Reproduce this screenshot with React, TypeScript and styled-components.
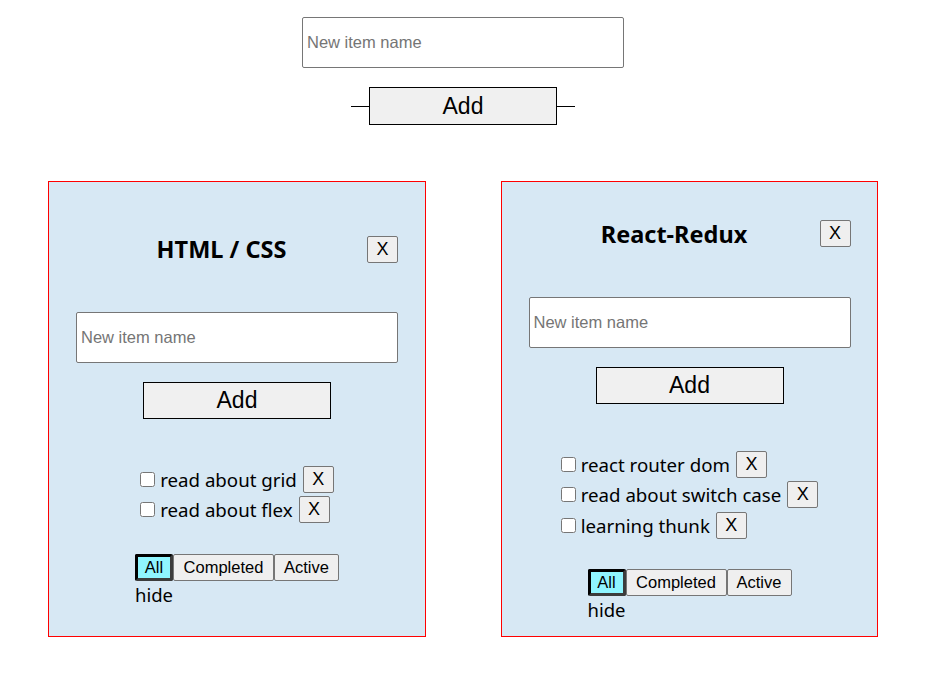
import styled, { createGlobalStyle } from 'styled-components';

const GlobalStyle = createGlobalStyle`
  body {
    margin: 0;
    background: #fff;
    font-family: "Noto Sans", "Open Sans", sans-serif;
    color: #000;
  }
`;

type Todo = { id: number; title: string };
type TodoList = { id: number; title: string; width: number; items: Todo[] };

const lists: TodoList[] = [
  {
    id: 1,
    title: 'HTML / CSS',
    width: 378,
    items: [
      { id: 1, title: 'read about grid' },
      { id: 2, title: 'read about flex' },
    ],
  },
  {
    id: 2,
    title: 'React-Redux',
    width: 377,
    items: [
      { id: 3, title: 'react router dom' },
      { id: 4, title: 'read about switch case' },
      { id: 5, title: 'learning thunk' },
    ],
  },
];

const filters = [
  { name: 'All', width: 38 },
  { name: 'Completed', width: 101 },
  { name: 'Active', width: 65 },
];

const App = () => {
  return (
    <Page>
      <GlobalStyle />
      <TopForm>
        <TextInput placeholder="New item name" />
        <AddRow>
          <Dash />
          <AddButton>Add</AddButton>
          <Dash />
        </AddRow>
      </TopForm>
      <Cards>
        {lists.map((list) => (
          <Card key={list.id} $width={list.width}>
            <CardBody>
              <Header>
                <Title>{list.title}</Title>
                <SmallButton>X</SmallButton>
              </Header>
              <CardInput placeholder="New item name" />
              <CardAdd>Add</CardAdd>
              <Items>
                {list.items.map((item) => (
                  <Item key={item.id}>
                    <Check type="checkbox" />
                    <ItemText>{item.title}</ItemText>
                    <SmallButton>X</SmallButton>
                  </Item>
                ))}
              </Items>
              <Footer>
                <FilterRow>
                  {filters.map((f) => (
                    <FilterButton
                      key={f.name}
                      $width={f.width}
                      $active={f.name === 'All'}
                    >
                      {f.name}
                    </FilterButton>
                  ))}
                </FilterRow>
                <Hide>hide</Hide>
              </Footer>
            </CardBody>
          </Card>
        ))}
      </Cards>
    </Page>
  );
};

export default App;

const Page = styled.div`
  width: 929px;
  padding-top: 17px;
`;

const TopForm = styled.div`
  display: flex;
  flex-direction: column;
  align-items: center;
  padding-right: 3px;
`;

const TextInput = styled.input`
  box-sizing: border-box;
  width: 322px;
  height: 51px;
  padding: 0 4px;
  border: 1px solid #767676;
  border-radius: 2px;
  background: #fff;
  font-family: "Liberation Sans", Arial, sans-serif;
  font-size: 16.5px;
  outline: none;

  &::placeholder {
    color: #757575;
  }
`;

const AddRow = styled.div`
  display: flex;
  align-items: center;
  margin-top: 19px;
`;

const Dash = styled.span`
  width: 18px;
  height: 1px;
  background: #000;
`;

const AddButton = styled.button`
  box-sizing: border-box;
  width: 188px;
  height: 38px;
  padding: 0;
  border: 1px solid #000;
  background: #f0f0f0;
  font-family: "Liberation Sans", Arial, sans-serif;
  font-size: 23px;
  color: #000;
`;

const Cards = styled.div`
  display: flex;
  gap: 75px;
  margin-top: 56px;
  padding-left: 48px;
`;

const Card = styled.div<{ $width: number }>`
  box-sizing: border-box;
  width: ${(p) => p.$width}px;
  height: 456px;
  border: 1px solid #ff0000;
  background: #d7e8f4;
  display: flex;
  flex-direction: column;
  justify-content: center;
  align-items: center;
`;

const CardBody = styled.div`
  width: 322px;
  display: flex;
  flex-direction: column;
`;

const Header = styled.div`
  display: flex;
  align-items: center;
  margin-top: 23px;
`;

const Title = styled.h2`
  flex: 1;
  margin: 0;
  text-align: center;
  font-size: 23.5px;
  font-weight: 700;
  line-height: 32px;
`;

const SmallButton = styled.button`
  box-sizing: border-box;
  width: 31px;
  height: 27px;
  padding: 0;
  border: 1px solid #767676;
  border-radius: 2px;
  background: #efefef;
  font-family: "Liberation Sans", Arial, sans-serif;
  font-size: 18px;
  color: #000;
  flex-shrink: 0;
`;

const CardInput = styled(TextInput)`
  margin-top: 47px;
`;

const CardAdd = styled(AddButton)`
  height: 37px;
  margin: 19px auto 0;
`;

const Items = styled.div`
  align-self: center;
  display: flex;
  flex-direction: column;
  margin-top: 45px;
`;

const Item = styled.div`
  display: flex;
  align-items: center;
  height: 30.5px;
`;

const Check = styled.input`
  width: 15px;
  height: 15px;
  margin: 0 5px 0 0;
`;

const ItemText = styled.span`
  font-size: 18.7px;
  margin-right: 6px;
`;

const Footer = styled.div`
  align-self: center;
  margin-top: 29px;
`;

const FilterRow = styled.div`
  display: flex;
`;

const FilterButton = styled.button<{ $width: number; $active: boolean }>`
  box-sizing: border-box;
  width: ${(p) => p.$width}px;
  height: 27px;
  padding: 0;
  border: ${(p) => (p.$active ? '3px inset #3c3c3c' : '1px solid #767676')};
  border-radius: 2px;
  background: ${(p) => (p.$active ? '#8ff5ff' : '#efefef')};
  font-family: "Liberation Sans", Arial, sans-serif;
  font-size: 16.5px;
  color: #000;
`;

const Hide = styled.div`
  font-size: 18.5px;
  line-height: 27px;
`;
